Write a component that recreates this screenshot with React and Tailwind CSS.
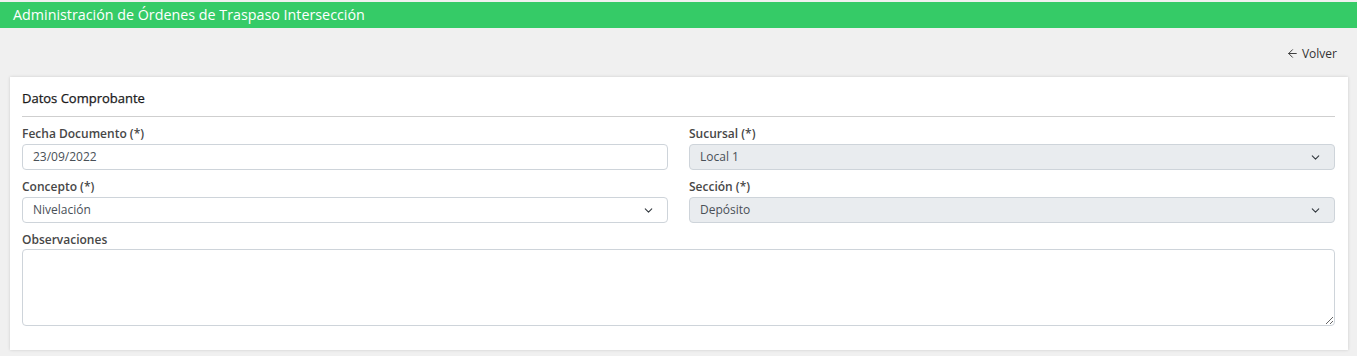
import { ChevronDown, ArrowLeft } from 'lucide-react';

function Label({ children, className = 'mb-[2px]' }) {
  return (
    <p className={`text-[12px] leading-[16px] font-semibold text-[#474747] ${className}`}>
      {children}
    </p>
  );
}

function Select({ value, disabled }) {
  return (
    <div
      className={`h-[26px] flex items-center justify-between rounded-[4px] border border-[#ced4da] px-[10px] text-[12px] text-[#495057] ${
        disabled ? 'bg-[#e9ecef]' : 'bg-white'
      }`}
    >
      <span>{value}</span>
      <ChevronDown size={13} strokeWidth={2} className="text-[#343a40] mr-[2px]" />
    </div>
  );
}

export default function App() {
  return (
    <div
      className="min-h-[356px] bg-[#f0f0f0] pt-[2px]"
      style={{ fontFamily: '"Open Sans", "Noto Sans", sans-serif' }}
    >
      <div className="h-[26px] bg-[#35cb67] flex items-center pl-[13px] text-white text-[14.3px]">
        Administración de Órdenes de Traspaso Intersección
      </div>

      <div className="h-[49px] flex items-center justify-end pr-[20px] pt-[2px]">
        <span className="flex items-center gap-[3px] text-[12px] text-[#333]">
          <ArrowLeft size={13} strokeWidth={1.75} />
          Volver
        </span>
      </div>

      <div className="mx-[10px] mr-[9px] bg-white shadow-[0_0_3px_rgba(0,0,0,0.15)] px-[12px] pr-[13px] pt-[12px] pb-[24px]">
        <div className="text-[13px] leading-[18px] text-[#1a1a1a] pb-[9px] border-b border-[#cfcfcf] [-webkit-text-stroke:0.25px_#1a1a1a]">
          Datos Comprobante
        </div>

        <div className="grid grid-cols-2 gap-x-[21px] gap-y-[9px] mt-[9px]">
          <div>
            <Label>Fecha Documento (*)</Label>
            <div className="h-[26px] flex items-center rounded-[4px] border border-[#ced4da] px-[10px] text-[12px] text-[#495057] bg-white">
              23/09/2022
            </div>
          </div>
          <div>
            <Label>Sucursal (*)</Label>
            <Select value="Local 1" disabled />
          </div>
          <div>
            <Label>Concepto (*)</Label>
            <Select value="Nivelación" />
          </div>
          <div>
            <Label>Sección (*)</Label>
            <Select value="Depósito" disabled />
          </div>
          <div className="col-span-2">
            <Label className="mb-[1px]">Observaciones</Label>
            <textarea className="block w-full h-[77px] rounded-[4px] border border-[#ced4da] bg-white text-[12px] px-[10px] py-[4px] outline-none" />
          </div>
        </div>
      </div>
    </div>
  );
}
